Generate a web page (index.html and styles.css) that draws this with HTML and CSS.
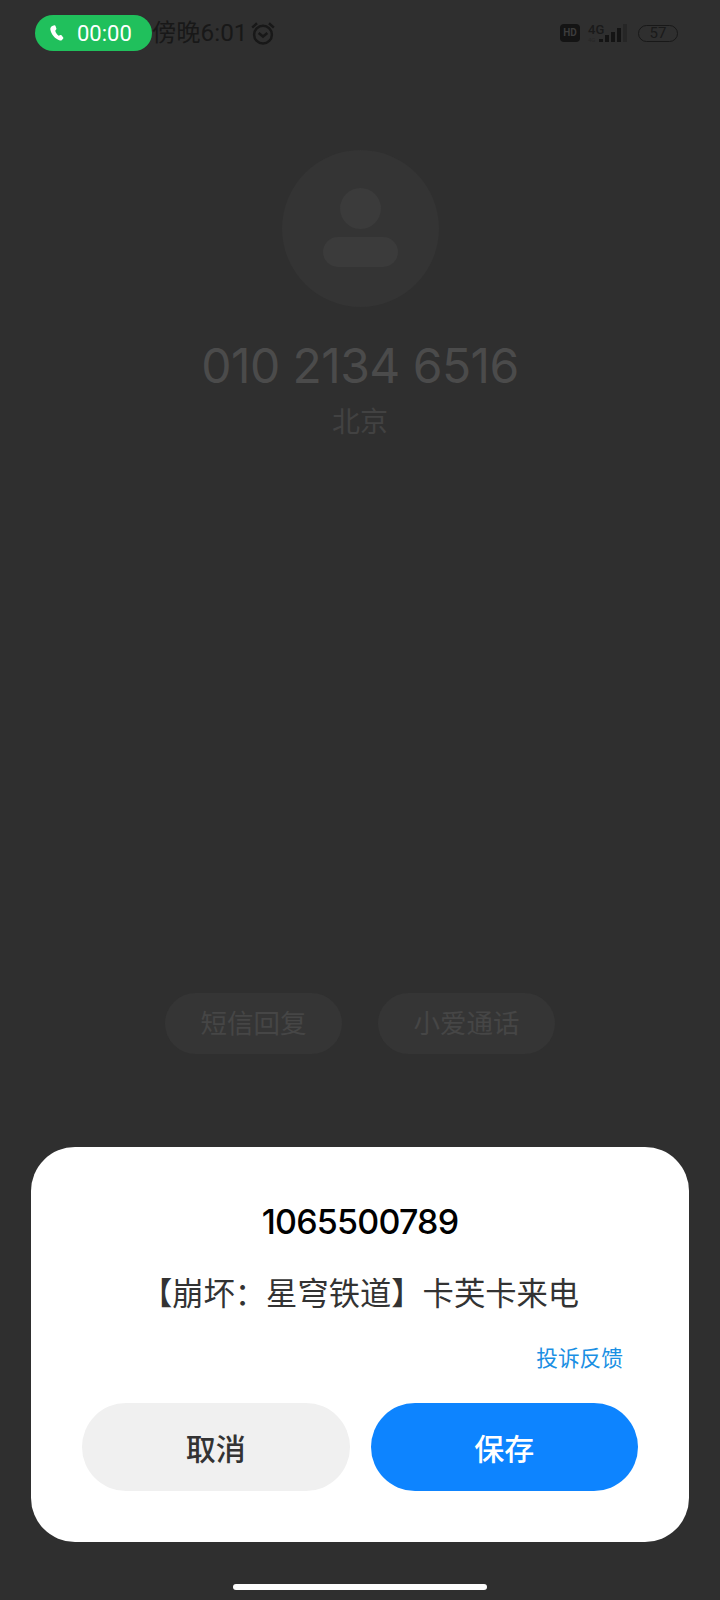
FILE: index.html
```html
<!DOCTYPE html>
<html>
<head>
  <meta charset="UTF-8">
  <title>来电</title>
  <link rel="stylesheet" href="styles.css">
</head>
<body>
  <div class="status">
    <div class="call-pill">
      <svg class="call-icon" viewBox="0 0 16 18"><path d="M3.300.6L5 .2c.6-.1 1 .1 1.200.6l1.100 3c.2.500.1.900-.3 1.200L6 6.300c.5 2.200 2 4.500 3.900 5.900l2-.9c.5-.2.900-.1 1.200.3l2 2.500c.3.400.3.900 0 1.300l-1.400 1.500c-.6.600-1.500.9-2.400.6C6 15.900 1.200 10.500.4 5 .1 3 1.300 1.100 3.300.6z"/></svg>
      <span>00:00</span>
    </div>
    <div class="clock">傍晚6:01</div>
    <svg class="alarm" viewBox="0 0 24 24"><circle cx="12" cy="13.500" r="8.200"/><path d="M8 12l4 3.300 4-3.300"/><path d="M2 7L6.500 3M22 7L17.500 3"/></svg>
    <div class="status-right">
      <div class="hd">HD</div>
      <div class="net">
        <div class="net-label">4G</div>
        <div class="net-sub">4G</div>
      </div>
      <div class="bars">
        <i class="bar-1"></i><i class="bar-2"></i><i class="bar-3"></i><i class="bar-4"></i><i class="bar-5"></i>
      </div>
      <div class="battery">57</div>
    </div>
  </div>

  <div class="caller">
    <div class="avatar">
      <div class="avatar-head"></div>
      <div class="avatar-body"></div>
    </div>
    <div class="number">010 2134 6516</div>
    <div class="location">北京</div>
  </div>

  <div class="actions">
    <div class="action">短信回复</div>
    <div class="action">小爱通话</div>
  </div>

  <div class="dialog">
    <div class="dialog-title">1065500789</div>
    <div class="dialog-msg">【崩坏：星穹铁道】卡芙卡来电</div>
    <div class="dialog-link">投诉反馈</div>
    <div class="dialog-btns">
      <button class="btn btn-cancel">取消</button>
      <button class="btn btn-save">保存</button>
    </div>
  </div>

  <div class="home-bar"></div>
</body>
</html>
```

FILE: styles.css
```css
html, body {
  margin: 0;
  padding: 0;
}
body {
  width: 720px;
  height: 1600px;
  overflow: hidden;
  background: #2f2f2f;
  font-family: "Roboto", "Noto Sans CJK SC", sans-serif;
  position: relative;
}

/* status bar */
.status {
  height: 66px;
  display: flex;
  align-items: center;
  padding: 0 42px 0 152px;
  color: #181818;
}
.call-pill {
  position: absolute;
  left: 35px;
  top: 15px;
  width: 117px;
  height: 36px;
  border-radius: 18px;
  background: #20c05c;
  color: #fff;
  font-size: 22px;
  display: flex;
  align-items: center;
  gap: 13px;
  padding-left: 15px;
  box-sizing: border-box;
}
.call-icon {
  width: 14px;
  height: 16px;
  fill: #fff;
}
.clock {
  font-size: 24.300px;
  line-height: 30px;
}
.alarm {
  width: 26px;
  height: 26px;
  margin-left: 3px;
  fill: none;
  stroke: #181818;
  stroke-width: 2.300;
}
.status-right {
  margin-left: auto;
  display: flex;
  align-items: center;
}
.hd {
  width: 20px;
  height: 18px;
  border-radius: 4px;
  background: #141414;
  color: #3c3c3c;
  font-size: 10px;
  font-weight: 700;
  line-height: 18px;
  text-align: center;
}
.net {
  margin: 0 -7px 0 8px;
  width: 18px;
  color: #1a1a1a;
}
.net-label {
  font-size: 13px;
  line-height: 13px;
  font-weight: 500;
}
.net-sub {
  font-size: 6px;
  line-height: 8px;
  color: #262626;
}
.bars {
  display: flex;
  align-items: flex-end;
  gap: 2px;
  height: 18px;
}
.bars i {
  display: block;
  width: 4px;
  background: #141414;
}
.bar-1 { height: 3px; }
.bar-2 { height: 7px; }
.bar-3 { height: 10px; }
.bar-4 { height: 14px; }
.bars .bar-5 { height: 18px; background: #262626; }
.battery {
  margin-left: 11px;
  width: 40px;
  height: 17px;
  box-sizing: border-box;
  border: 1.500px solid #181818;
  border-radius: 9px;
  font-size: 15px;
  line-height: 14px;
  text-align: center;
  color: #1a1a1a;
}

/* caller info, dimmed behind the dialog */
.caller {
  margin-top: 84px;
  display: flex;
  flex-direction: column;
  align-items: center;
}
.avatar {
  width: 157px;
  height: 157px;
  border-radius: 50%;
  background: #343434;
  display: flex;
  flex-direction: column;
  align-items: center;
  box-sizing: border-box;
  padding-top: 38px;
}
.avatar-head {
  width: 41px;
  height: 41px;
  border-radius: 50%;
  background: #3b3b3b;
}
.avatar-body {
  width: 75px;
  height: 30px;
  margin-top: 8px;
  border-radius: 15px;
  background: #3b3b3b;
}
.number {
  margin-top: 29px;
  font-family: "Inter", "Roboto", sans-serif;
  font-size: 48px;
  font-weight: 400;
  letter-spacing: -0.550px;
  line-height: 60px;
  color: #4b4b4b;
}
.location {
  margin-top: 9px;
  font-size: 28px;
  line-height: 36px;
  color: #424242;
}

.actions {
  margin-top: 552px;
  display: flex;
  justify-content: center;
  gap: 36px;
}
.action {
  width: 177px;
  height: 61px;
  border-radius: 31px;
  background: #353535;
  color: #464646;
  font-size: 26.500px;
  line-height: 61px;
  text-align: center;
}

/* dialog */
.dialog {
  margin: 93px 31px 0;
  height: 395px;
  box-sizing: border-box;
  padding: 53px 51px 0;
  border-radius: 44px;
  background: #fff;
  text-align: center;
}
.dialog-title {
  font-family: "Inter", "Roboto", sans-serif;
  font-size: 34px;
  line-height: 44px;
  font-weight: 500;
  letter-spacing: -0.800px;
  color: #000;
}
.dialog-msg {
  margin-top: 31px;
  font-size: 31.300px;
  line-height: 40px;
  color: #333;
  white-space: nowrap;
}
.dialog-link {
  margin-top: 29px;
  padding-right: 15px;
  font-size: 21.700px;
  line-height: 30px;
  text-align: right;
  color: #1a8fe3;
}
.dialog-btns {
  margin-top: 29px;
  display: flex;
  gap: 21px;
}
.btn {
  flex: 1;
  height: 88px;
  border: none;
  border-radius: 44px;
  font-family: inherit;
  font-size: 30px;
  font-weight: 500;
}
.btn-cancel {
  background: #f0f0f0;
  color: #333;
}
.btn-save {
  background: #0d84ff;
  color: #fff;
}

.home-bar {
  width: 254px;
  height: 6px;
  margin: 42px auto 0;
  border-radius: 3px;
  background: #fff;
}
```
